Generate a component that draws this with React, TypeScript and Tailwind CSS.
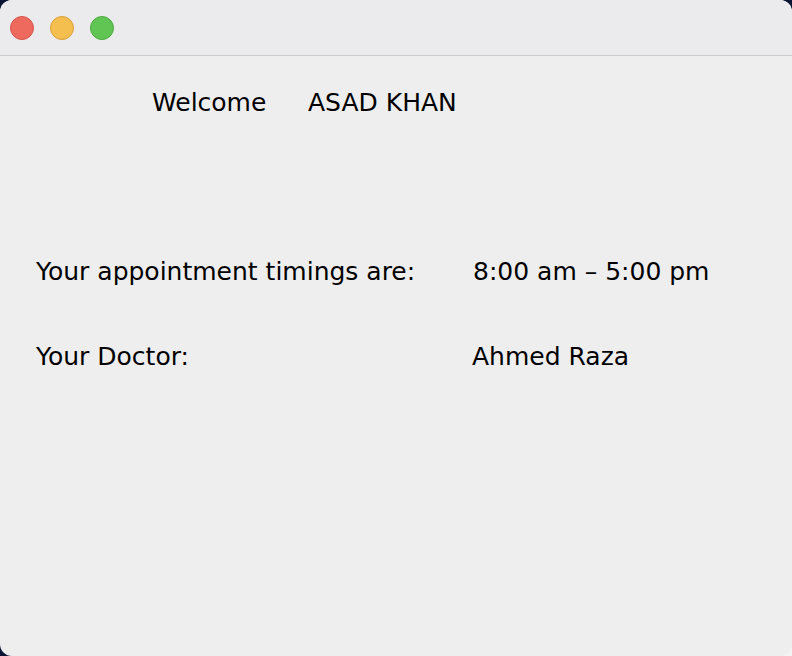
import React from "react";

const font = { fontFamily: '"DejaVu Sans", "Liberation Sans", sans-serif' };

const TrafficLights = () => (
  <div className="flex items-center gap-[16px] pl-[10px]">
    <div className="w-[24px] h-[24px] rounded-full bg-[#ee6a5f] border border-[#d5554b]" />
    <div className="w-[24px] h-[24px] rounded-full bg-[#f5bf4f] border border-[#d9a13a]" />
    <div className="w-[24px] h-[24px] rounded-full bg-[#61c554] border border-[#4ea83f]" />
  </div>
);

const App = () => {
  return (
    <div
      className="w-[792px] h-[656px] bg-[linear-gradient(135deg,#0b1634_90%,#f4f4f4_90%)] overflow-hidden"
      style={font}
    >
      <div className="w-full h-full rounded-[12px] bg-[#eeeeee] overflow-hidden flex flex-col">
        <div className="h-[56px] shrink-0 flex items-center bg-[#ebebed] border-b border-[#cccccc]">
          <TrafficLights />
        </div>

        <div className="flex-1 text-[25px] text-black leading-none">
          <div className="flex pt-[34px] pl-[152px]">
            <span className="w-[156px]">Welcome</span>
            <span>ASAD KHAN</span>
          </div>

          <div className="flex pt-[144px] pl-[36px]">
            <span className="w-[437px]">Your appointment timings are:</span>
            <span>8:00 am – 5:00 pm</span>
          </div>

          <div className="flex pt-[60px] pl-[36px]">
            <span className="w-[436px]">Your Doctor:</span>
            <span>Ahmed Raza</span>
          </div>
        </div>
      </div>
    </div>
  );
};

export default App;
